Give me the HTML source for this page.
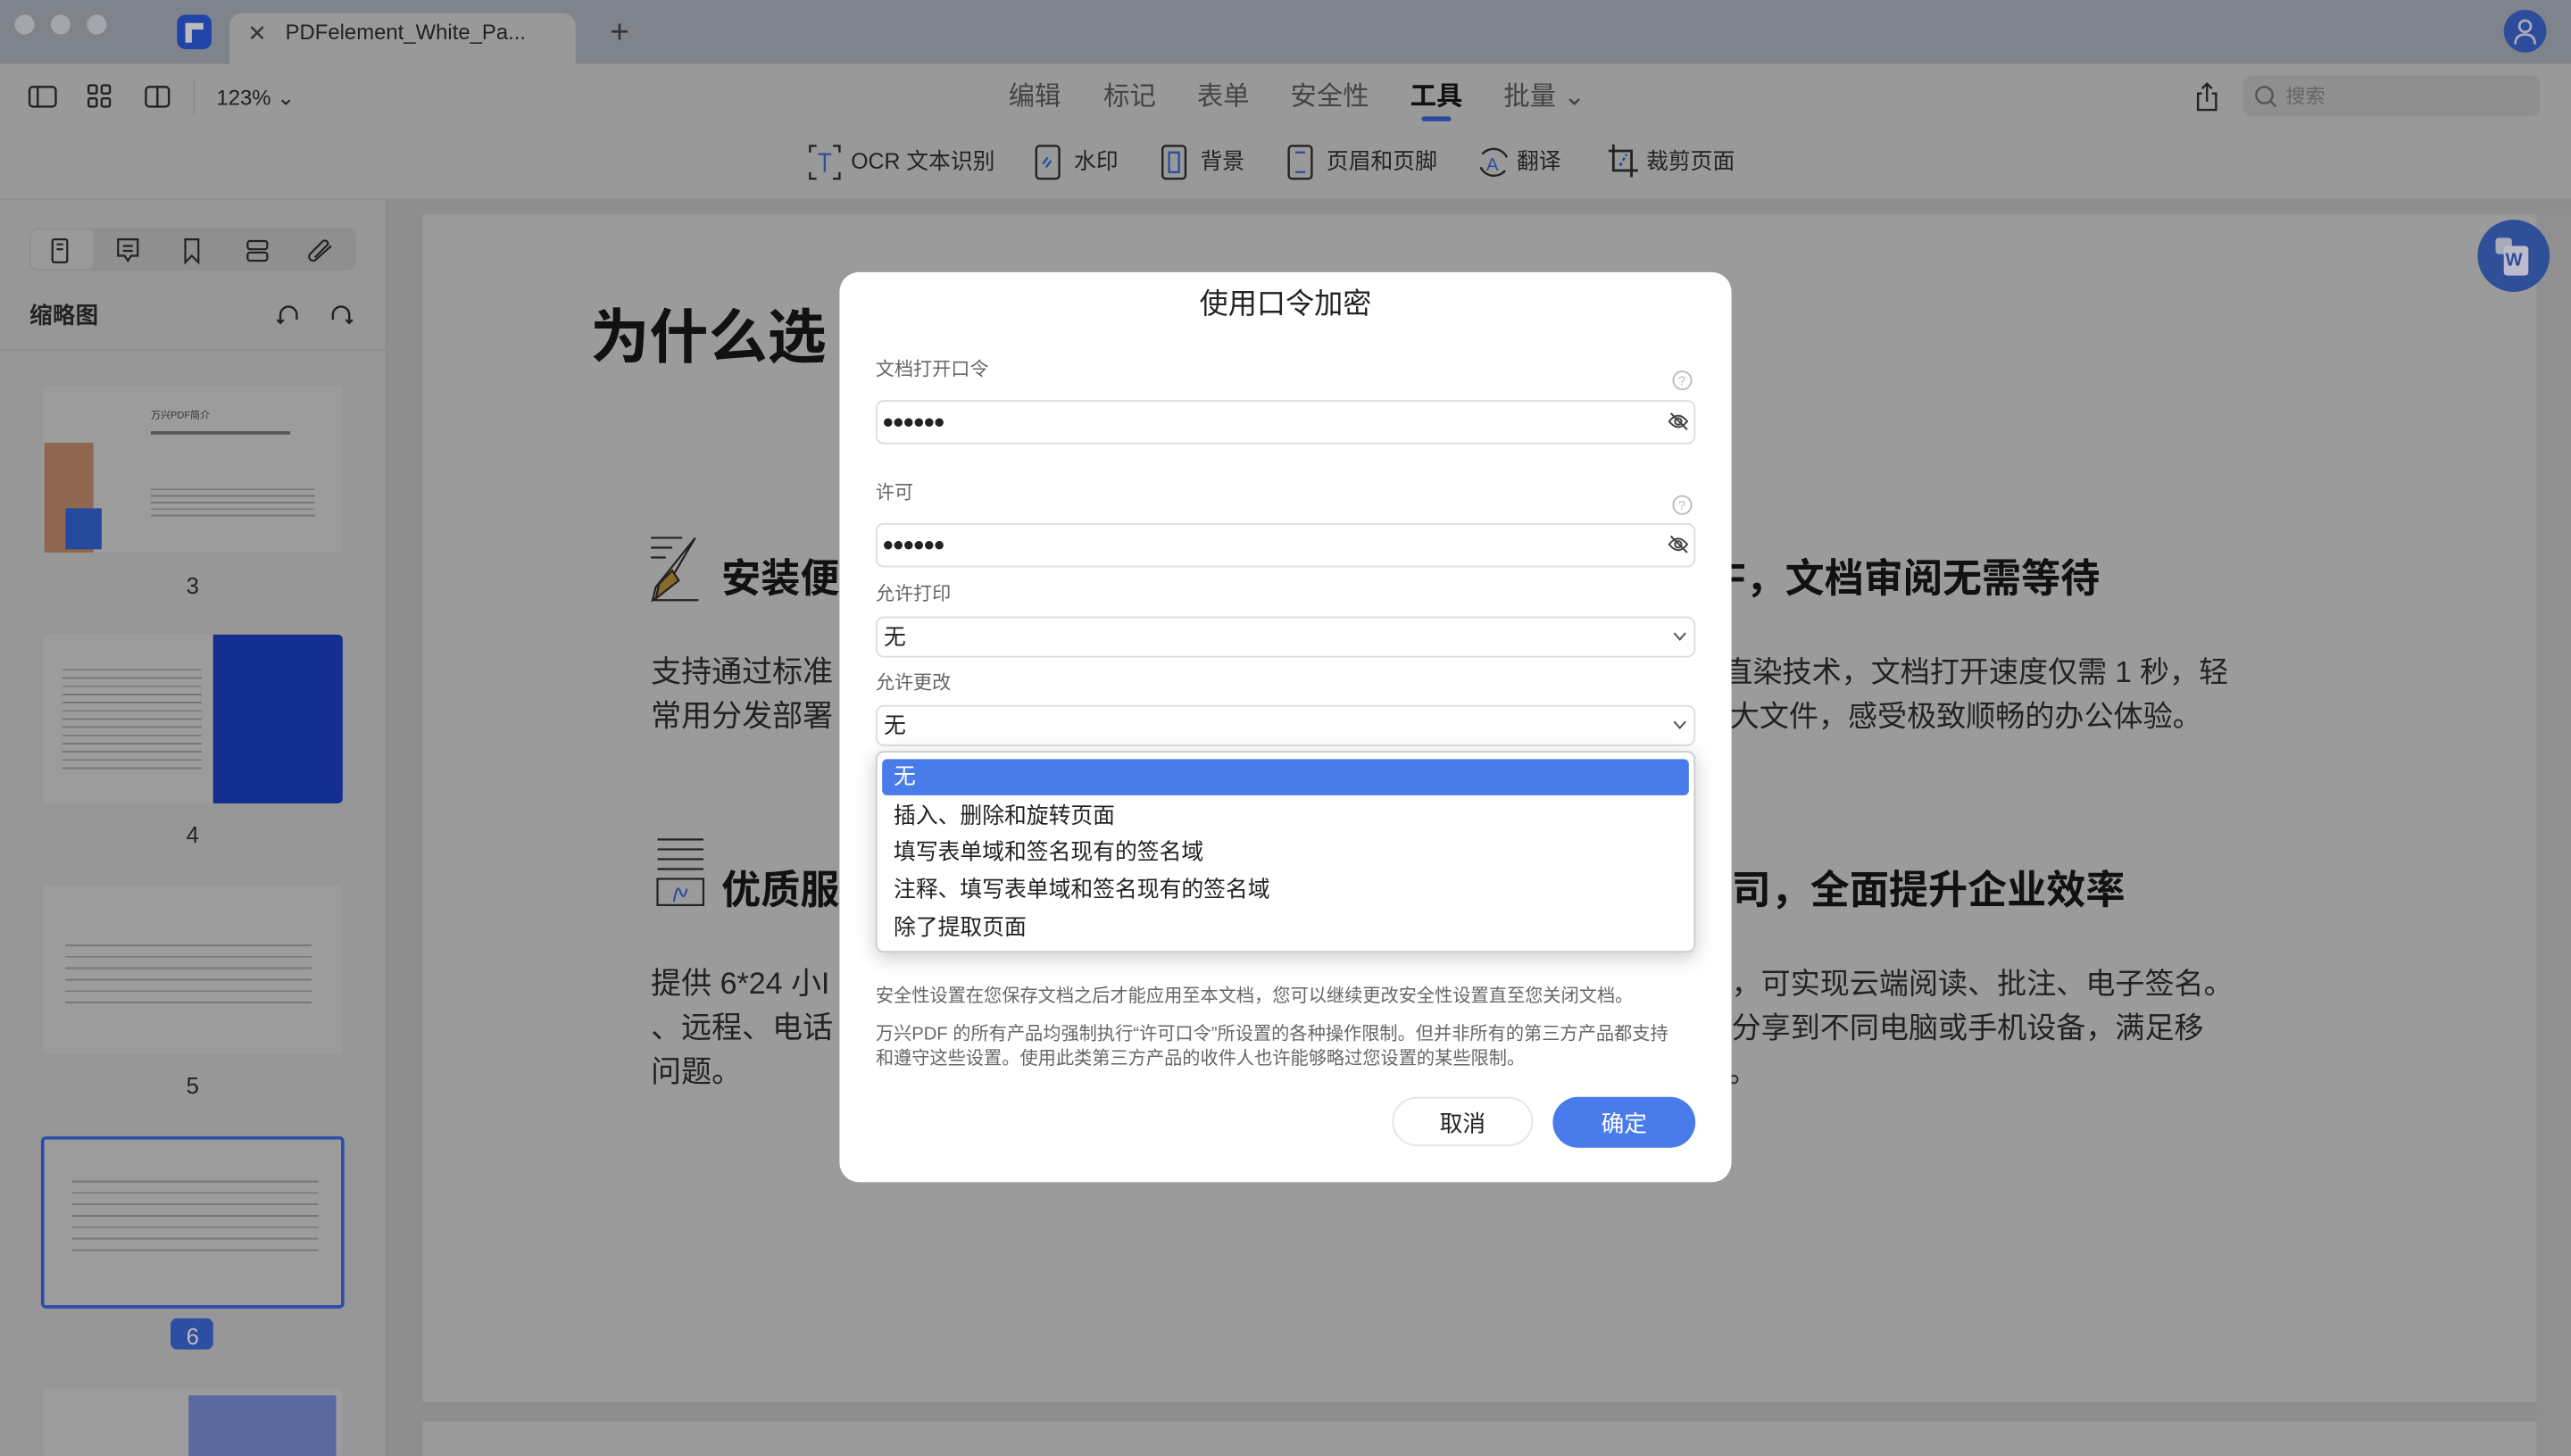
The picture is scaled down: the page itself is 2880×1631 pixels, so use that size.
<!DOCTYPE html>
<html><head><meta charset="utf-8">
<style>
html,body{margin:0;padding:0;width:2880px;height:1630px;overflow:hidden;background:#999;}
#s{position:absolute;left:0;top:0;width:1568px;height:888px;transform:scale(1.836735);transform-origin:0 0;font-family:"Liberation Sans","Noto Sans CJK SC",sans-serif;color:#222;}
.a{position:absolute;}
.t{position:absolute;white-space:nowrap;line-height:1;}
svg{position:absolute;overflow:visible}
.thumb{position:absolute;left:26px;width:183px;background:#9c9c9c;border-radius:3px;}
.num{position:absolute;width:235px;text-align:center;font-size:14px;color:#222;}
.lbl{position:absolute;left:534px;font-size:11.5px;color:#666;}
.inp{position:absolute;left:534px;width:498px;border:1px solid #ddd;border-radius:5px;background:#fff;}
.dd{position:absolute;left:545px;font-size:13.5px;color:#222;}
</style></head><body><div id="s">
<!-- tab bar -->
<div class="a" style="left:0;top:0;width:1568px;height:39px;background:#7e838c"></div>
<div class="a" style="left:9px;top:9px;width:12px;height:12px;border-radius:6px;background:#a4a6ab"></div>
<div class="a" style="left:31px;top:9px;width:12px;height:12px;border-radius:6px;background:#a4a6ab"></div>
<div class="a" style="left:53px;top:9px;width:12px;height:12px;border-radius:6px;background:#a4a6ab"></div>
<div class="a" style="left:108px;top:9px;width:21px;height:21px;border-radius:5px;background:#2044a8"></div>
<div class="a" style="left:113px;top:14px;width:11px;height:4px;background:#bbb"></div>
<div class="a" style="left:113px;top:18px;width:4px;height:8px;background:#bbb"></div>
<div class="a" style="top:8px;height:31px;background:#999;border-radius:8px 8px 0 0;left:140px;width:211px"></div>
<div class="t" style="left:151px;top:13px;font-size:14px;color:#333">✕</div>
<div class="t" style="left:174px;top:13px;font-size:13px;color:#222">PDFelement_White_Pa...</div>
<div class="t" style="left:372px;top:10px;font-size:20px;color:#333">+</div>
<div class="a" style="left:1527px;top:6px;width:26px;height:26px;border-radius:13px;background:#2d4d9c"></div>
<svg style="left:1527px;top:6px" width="26" height="26"><circle cx="13" cy="10" r="3.5" fill="none" stroke="#aab" stroke-width="1.5"/><path d="M7 21 Q7 15 13 15 Q19 15 19 21" fill="none" stroke="#aab" stroke-width="1.5"/></svg>
<!-- toolbar -->
<div class="a" style="left:0;top:39px;width:1568px;height:83px;background:#999"></div>
<svg style="left:17px;top:52px" width="100" height="14" fill="none" stroke="#222" stroke-width="1.3"><rect x="1" y="1" width="16" height="12" rx="2"/><line x1="6" y1="1" x2="6" y2="13"/><rect x="37" y="0" width="5" height="5" rx="1"/><rect x="45" y="0" width="5" height="5" rx="1"/><rect x="37" y="8" width="5" height="5" rx="1"/><rect x="45" y="8" width="5" height="5" rx="1"/><rect x="72" y="1" width="14" height="12" rx="2"/><line x1="79" y1="1" x2="79" y2="13"/></svg>
<div class="a" style="left:118px;top:48px;width:1px;height:22px;background:#8c8c8c"></div>
<div class="t" style="left:132px;top:53px;font-size:13px;color:#222">123% ⌄</div>
<div class="t" style="left:615px;top:52px;font-size:16px;color:#444">编辑</div>
<div class="t" style="left:673px;top:52px;font-size:16px;color:#444">标记</div>
<div class="t" style="left:730px;top:52px;font-size:16px;color:#444">表单</div>
<div class="t" style="left:787px;top:52px;font-size:16px;color:#444">安全性</div>
<div class="t" style="left:860px;top:52px;font-size:16px;color:#111;font-weight:bold">工具</div>
<div class="a" style="left:867px;top:71px;width:18px;height:3px;border-radius:2px;background:#2b4a9c"></div>
<div class="t" style="left:917px;top:52px;font-size:16px;color:#444">批量 ⌄</div>
<svg style="left:1339px;top:50px" width="14" height="18" fill="none" stroke="#222" stroke-width="1.3"><path d="M4 7 H1.5 V17 H12.5 V7 H10"/><path d="M7 12 V1 M4 4 L7 1 L10 4"/></svg>
<div class="a" style="left:1368px;top:46px;width:181px;height:25px;border-radius:5px;background:#8f8f8f"></div>
<svg style="left:1375px;top:52px" width="14" height="14" fill="none" stroke="#555" stroke-width="1.3"><circle cx="6" cy="6" r="5"/><line x1="9.5" y1="9.5" x2="13" y2="13"/></svg>
<div class="t" style="left:1394px;top:53px;font-size:12px;color:#666">搜索</div>
<!-- row 2 -->
<svg style="left:493px;top:88px" width="20" height="22" fill="none" stroke="#222" stroke-width="1.3"><path d="M1 5 V1 H5 M15 1 H19 V5 M19 17 V21 H15 M5 21 H1 V17"/><path d="M6 6 H14 M10 6 V17" stroke="#2e4ea0"/></svg>
<div class="t" style="left:519px;top:92px;font-size:13.5px;color:#222">OCR 文本识别</div>
<svg style="left:631px;top:88px" width="16" height="22" fill="none" stroke="#222" stroke-width="1.3"><rect x="1" y="1" width="14" height="20" rx="2"/><path d="M5 12 L8 8 M7 14 L10 10" stroke="#2e4ea0"/></svg>
<div class="t" style="left:655px;top:92px;font-size:13.5px;color:#222">水印</div>
<svg style="left:708px;top:88px" width="16" height="22" fill="none" stroke="#222" stroke-width="1.3"><rect x="1" y="1" width="14" height="20" rx="2"/><rect x="5" y="5" width="6" height="12" stroke="#2e4ea0"/></svg>
<div class="t" style="left:732px;top:92px;font-size:13.5px;color:#222">背景</div>
<svg style="left:785px;top:88px" width="16" height="22" fill="none" stroke="#222" stroke-width="1.3"><rect x="1" y="1" width="14" height="20" rx="2"/><path d="M5 5 H11 M5 17 H11" stroke="#2e4ea0"/></svg>
<div class="t" style="left:809px;top:92px;font-size:13.5px;color:#222">页眉和页脚</div>
<svg style="left:900px;top:88px" width="22" height="22" fill="none" stroke="#222" stroke-width="1.3"><path d="M4 6 A9 9 0 0 1 19 8 M18 16 A9 9 0 0 1 3 14"/><text x="6.5" y="16" font-size="11" fill="#2e4ea0" stroke="none" font-family="Liberation Sans">A</text></svg>
<div class="t" style="left:925px;top:92px;font-size:13.5px;color:#222">翻译</div>
<svg style="left:980px;top:87px" width="20" height="22" fill="none" stroke="#222" stroke-width="1.5"><path d="M4 1 V17 H19 M1 5 H15 V21"/><path d="M8 14 L12 7" stroke="#2e4ea0" stroke-dasharray="2 1.5"/></svg>
<div class="t" style="left:1004px;top:92px;font-size:13.5px;color:#222">裁剪页面</div>
<div class="a" style="left:0;top:121px;width:1568px;height:1px;background:#8d8d8d"></div>
<!-- sidebar -->
<div class="a" style="left:0;top:122px;width:235px;height:766px;background:#979797"></div>
<div class="a" style="left:235px;top:122px;width:1px;height:766px;background:#8a8a8a"></div>
<div class="a" style="left:18px;top:139px;width:199px;height:26px;border-radius:5px;background:#8f8f8f"></div>
<div class="a" style="left:19px;top:140px;width:38px;height:24px;border-radius:4px;background:#9a9a9a"></div>
<svg style="left:30px;top:145px" width="170" height="16" fill="none" stroke="#222" stroke-width="1.2"><rect x="2" y="1" width="9" height="14" rx="1"/><path d="M4.5 4 H8.5 M4.5 7 H8.5"/><path d="M42 1 H54 V11 H50 L48 14 L46 11 H42 Z M45 5 H51 M45 8 H51"/><path d="M83 1 H91 V15 L87 11 L83 15 Z"/><rect x="121" y="2" width="12" height="5" rx="1.5"/><rect x="121" y="9" width="12" height="5" rx="1.5"/><path d="M172 5 L163 13 A2.5 2.5 0 0 1 159 10 L167 2 A2 2 0 0 1 170 4 L162 12"/></svg>
<div class="t" style="left:18px;top:185px;font-size:14px;font-weight:bold;color:#222">缩略图</div>
<svg style="left:167px;top:183px" width="50" height="16" fill="none" stroke="#222" stroke-width="1.3"><path d="M4 14 V9 A5 5 0 1 1 14 9 V12 M2 12 L4 14 L6 12"/><path d="M46 14 V9 A5 5 0 1 0 36 9 V12 M44 12 L46 14 L48 12"/></svg>
<div class="a" style="left:0;top:213px;width:235px;height:1px;background:#8c8c8c"></div>
<div class="thumb" style="top:235px;height:102px"></div>
<div class="a" style="left:27px;top:270px;width:30px;height:67px;background:#8c5a3e;opacity:.8"></div>
<div class="a" style="left:40px;top:310px;width:22px;height:25px;background:#234a9c"></div>
<div class="t" style="left:92px;top:251px;font-size:6px;color:#333">万兴PDF简介</div>
<div class="a" style="left:92px;top:263px;width:85px;height:2px;background:#555"></div>
<div class="a" style="left:92px;top:298px;width:100px;height:18px;background:repeating-linear-gradient(#777 0 1px,transparent 1px 4px)"></div>
<div class="num" style="top:349px">3</div>
<div class="thumb" style="top:387px;height:103px"></div>
<div class="a" style="left:130px;top:387px;width:79px;height:103px;background:#142d90;border-radius:0 3px 3px 0"></div>
<div class="a" style="left:38px;top:408px;width:85px;height:65px;background:repeating-linear-gradient(#777 0 1px,transparent 1px 5px)"></div>
<div class="num" style="top:501px">4</div>
<div class="thumb" style="top:540px;height:103px"></div>
<div class="a" style="left:40px;top:576px;width:150px;height:40px;background:repeating-linear-gradient(#777 0 1px,transparent 1px 7px)"></div>
<div class="num" style="top:654px">5</div>
<div class="thumb" style="top:693px;height:101px;border:2px solid #2b4fa8;left:25px;width:181px"></div>
<div class="a" style="left:44px;top:720px;width:150px;height:45px;background:repeating-linear-gradient(#777 0 1px,transparent 1px 7px)"></div>
<div class="a" style="left:104px;top:804px;width:26px;height:19px;border-radius:4px;background:#2d4fa3"></div>
<div class="num" style="top:807px;color:#bbb">6</div>
<div class="thumb" style="top:847px;height:41px"></div>
<div class="a" style="left:115px;top:851px;width:90px;height:37px;background:#5a6aa0"></div>
<!-- doc area -->
<div class="a" style="left:236px;top:122px;width:1332px;height:766px;background:#8e8e8e"></div>
<div class="a" style="left:258px;top:131px;width:1289px;height:724px;background:#9b9b9b"></div>
<div class="a" style="left:258px;top:867px;width:1289px;height:21px;background:#9b9b9b"></div>
<div class="a" style="left:1547px;top:131px;width:21px;height:757px;background:#909090"></div>
<div class="t" style="left:360px;top:188px;font-size:36px;font-weight:bold;color:#111">为什么选</div>
<svg style="left:396px;top:326px" width="32" height="42" fill="none" stroke="#222" stroke-width="1.2"><path d="M1 2 H20 M1 8 H14 M1 14 H10 M28 2 L8 36 L2 40 L4 32 Z"/><path d="M6 30 L14 22 L18 28 L4 39 Z" fill="#8a6a2a"/><path d="M2 40 H30"/></svg>
<div class="t" style="left:440px;top:342px;font-size:24px;font-weight:bold;color:#111">安装便</div>
<div class="t" style="left:1050px;top:342px;font-size:24px;font-weight:bold;color:#111">F，文档审阅无需等待</div>
<div class="t" style="left:397px;top:401px;font-size:18.5px;color:#222">支持通过标准</div>
<div class="t" style="left:397px;top:428px;font-size:18.5px;color:#222">常用分发部署</div>
<div class="t" style="left:1051px;top:401px;font-size:18px;color:#222">直染技术，文档打开速度仅需 1 秒，轻</div>
<div class="t" style="left:1055px;top:428px;font-size:18px;color:#222">大文件，感受极致顺畅的办公体验。</div>
<svg style="left:399px;top:510px" width="32" height="44" fill="none" stroke="#222" stroke-width="1.2"><path d="M2 2 H30 M2 8 H30 M2 14 H30 M2 20 H30"/><rect x="2" y="26" width="28" height="16" /><path d="M12 40 Q14 28 16 34 Q18 40 20 32" stroke="#2e4ea0"/></svg>
<div class="t" style="left:440px;top:532px;font-size:24px;font-weight:bold;color:#111">优质服</div>
<div class="t" style="left:1056px;top:532px;font-size:24px;font-weight:bold;color:#111">司，全面提升企业效率</div>
<div class="t" style="left:397px;top:591px;font-size:18.5px;color:#222">提供 6*24 小I</div>
<div class="t" style="left:397px;top:618px;font-size:18.5px;color:#222">、远程、电话</div>
<div class="t" style="left:397px;top:645px;font-size:18.5px;color:#222">问题。</div>
<div class="t" style="left:1056px;top:591px;font-size:18px;color:#222">，可实现云端阅读、批注、电子签名。</div>
<div class="t" style="left:1056px;top:618px;font-size:18px;color:#222">分享到不同电脑或手机设备，满足移</div>
<div class="t" style="left:1054px;top:645px;font-size:18px;color:#222">。</div>
<div class="a" style="left:1511px;top:134px;width:44px;height:44px;border-radius:22px;background:#2f4f99"></div>
<div class="a" style="left:1522px;top:145px;width:10px;height:10px;background:#aab;border-radius:2px"></div>
<div class="a" style="left:1527px;top:150px;width:15px;height:18px;background:#bbc;border-radius:2px"></div>
<div class="t" style="left:1528px;top:154px;font-size:11px;font-weight:bold;color:#2f4f99">W</div>
<!-- dialog -->
<div class="a" style="left:512px;top:166px;width:544px;height:555px;border-radius:12px;background:#fff"></div>
<div class="t" style="left:512px;width:544px;text-align:center;top:177px;font-size:17.5px;color:#222">使用口令加密</div>
<div class="t lbl" style="top:221px">文档打开口令</div>
<svg style="left:1020px;top:226px" width="12" height="12" fill="none" stroke="#bbb" stroke-width="1"><circle cx="6" cy="6" r="5.5"/><text x="3.5" y="9" font-size="8" fill="#bbb" stroke="none" font-family="Liberation Sans">?</text></svg>
<div class="inp" style="top:244px;height:25px"></div>
<div class="t" style="left:538px;top:251px;font-size:12px;color:#222;letter-spacing:-1px">●●●●●●</div>
<svg style="left:1017px;top:251px" width="13" height="12" fill="none" stroke="#444" stroke-width="1.1"><path d="M1 6 Q6.5 -1 12 6 Q6.5 13 1 6 Z"/><circle cx="6.5" cy="6" r="2"/><line x1="2" y1="1" x2="12" y2="11"/></svg>
<div class="t lbl" style="top:296px">许可</div>
<svg style="left:1020px;top:302px" width="12" height="12" fill="none" stroke="#bbb" stroke-width="1"><circle cx="6" cy="6" r="5.5"/><text x="3.5" y="9" font-size="8" fill="#bbb" stroke="none" font-family="Liberation Sans">?</text></svg>
<div class="inp" style="top:319px;height:25px"></div>
<div class="t" style="left:538px;top:326px;font-size:12px;color:#222;letter-spacing:-1px">●●●●●●</div>
<svg style="left:1017px;top:326px" width="13" height="12" fill="none" stroke="#444" stroke-width="1.1"><path d="M1 6 Q6.5 -1 12 6 Q6.5 13 1 6 Z"/><circle cx="6.5" cy="6" r="2"/><line x1="2" y1="1" x2="12" y2="11"/></svg>
<div class="t lbl" style="top:358px">允许打印</div>
<div class="inp" style="top:376px;height:23px"></div>
<div class="t" style="left:539px;top:382px;font-size:13.5px;color:#222">无</div>
<svg style="left:1020px;top:385px" width="9" height="6" fill="none" stroke="#555" stroke-width="1.1"><path d="M1 1 L4.5 5 L8 1"/></svg>
<div class="t lbl" style="top:412px">允许更改</div>
<div class="inp" style="top:430px;height:23px"></div>
<div class="t" style="left:539px;top:436px;font-size:13.5px;color:#222">无</div>
<svg style="left:1020px;top:439px" width="9" height="6" fill="none" stroke="#555" stroke-width="1.1"><path d="M1 1 L4.5 5 L8 1"/></svg>
<div class="a" style="left:534px;top:458px;width:500px;height:123px;border-radius:5px;background:#fff;box-shadow:0 3px 12px rgba(0,0,0,.2);border:0.5px solid #ccc;box-sizing:border-box"></div>
<div class="a" style="left:538px;top:463px;width:492px;height:22px;border-radius:3px;background:#4a7bea"></div>
<div class="t dd" style="top:467px;color:#fff">无</div>
<div class="t dd" style="top:491px">插入、删除和旋转页面</div>
<div class="t dd" style="top:513px">填写表单域和签名现有的签名域</div>
<div class="t dd" style="top:536px">注释、填写表单域和签名现有的签名域</div>
<div class="t dd" style="top:559px">除了提取页面</div>
<div class="t" style="left:534px;top:603px;font-size:11px;color:#666">安全性设置在您保存文档之后才能应用至本文档，您可以继续更改安全性设置直至您关闭文档。</div>
<div class="t" style="left:534px;top:626px;font-size:11px;color:#666">万兴PDF 的所有产品均强制执行“许可口令”所设置的各种操作限制。但并非所有的第三方产品都支持</div>
<div class="t" style="left:534px;top:641px;font-size:11px;color:#666">和遵守这些设置。使用此类第三方产品的收件人也许能够略过您设置的某些限制。</div>
<div class="a" style="left:849px;top:669px;width:86px;height:30px;border-radius:16px;border:1px solid #e4e4e4;box-sizing:border-box"></div>
<div class="t" style="left:849px;width:86px;text-align:center;top:678px;font-size:14px;color:#222">取消</div>
<div class="a" style="left:947px;top:669px;width:87px;height:31px;border-radius:16px;background:#4a7bea"></div>
<div class="t" style="left:947px;width:87px;text-align:center;top:678px;font-size:14px;color:#fff">确定</div>
</div></body></html>
